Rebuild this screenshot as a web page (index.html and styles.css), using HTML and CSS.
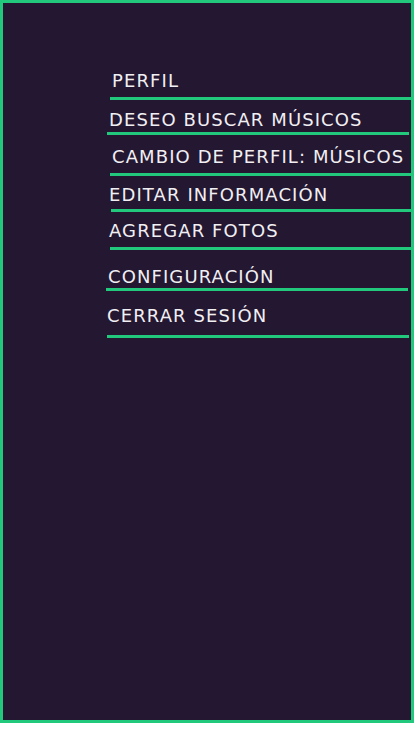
FILE: index.html
```html
<!DOCTYPE html>
<html lang="es">
<head>
<meta charset="utf-8">
<title>Menú</title>
<link rel="stylesheet" href="styles.css">
</head>
<body>
<div class="frame">
  <ul class="menu">
    <li class="item item--perfil"><span class="label">PERFIL</span></li>
    <li class="item item--buscar"><span class="label">DESEO BUSCAR MÚSICOS</span></li>
    <li class="item item--cambio"><span class="label">CAMBIO DE PERFIL: MÚSICOS</span></li>
    <li class="item item--editar"><span class="label">EDITAR INFORMACIÓN</span></li>
    <li class="item item--fotos"><span class="label">AGREGAR FOTOS</span></li>
    <li class="item item--config"><span class="label">CONFIGURACIÓN</span></li>
    <li class="item item--cerrar"><span class="label">CERRAR SESIÓN</span></li>
  </ul>
</div>
</body>
</html>
```

FILE: styles.css
```css
html, body {
  margin: 0;
  padding: 0;
  background: #ffffff;
}

.frame {
  box-sizing: border-box;
  width: 414px;
  height: 723px;
  border: 3px solid #22c97d;
  background: #231731;
}

.menu {
  list-style: none;
  margin: 0;
  padding: 0;
}

.item {
  border-bottom: 3px solid #22c97d;
  font-family: "DejaVu Sans", sans-serif;
  font-size: 18px;
  line-height: 20px;
  letter-spacing: 1.1px;
  color: #f1eff3;
  white-space: nowrap;
}

.label {
  display: block;
}

.item--perfil { margin: 68px 0 0 107px; padding-bottom: 6px; }
.item--perfil .label { padding-left: 2px; }

.item--buscar { margin: 10px 2px 0 104px; padding-bottom: 2px; }
.item--buscar .label { padding-left: 2px; }

.item--cambio { margin: 12px 0 0 107px; padding-bottom: 6px; }
.item--cambio .label { padding-left: 2px; }

.item--editar { margin: 9px 0 0 108px; padding-bottom: 4px; }
.item--editar .label { margin-left: -2px; }

.item--fotos { margin: 9px 0 0 107px; padding-bottom: 6px; }
.item--fotos .label { margin-left: -1px; }

.item--config { margin: 17px 3px 0 103px; padding-bottom: 1px; }
.item--config .label { padding-left: 2px; }

.item--cerrar { margin: 15px 2px 0 104px; padding-bottom: 9px; }
.item--cerrar .label { padding-left: 0; }
```
